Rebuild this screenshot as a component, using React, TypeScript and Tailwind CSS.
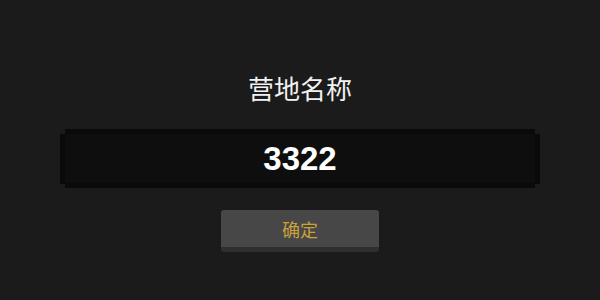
export default function App() {
  return (
    <div className="flex h-[300px] w-full flex-col items-center bg-[#1b1b1b] pt-[75px] font-['Liberation_Sans','Noto_Sans_CJK_SC',sans-serif]">
      <h1 className="font-['Noto_Sans_CJK_SC',sans-serif] text-[26px] leading-[26px] text-[#f2f2f2]">
        营地名称
      </h1>

      <div className="mt-[28px] flex items-center">
        <div className="h-[50px] w-[5px] bg-[#0a0a0a]" />
        <div className="flex h-[59px] w-[470px] items-center justify-center border-y-[5px] border-[#0a0a0a] bg-[#0e0e0e]">
          <span className="font-['Liberation_Sans',sans-serif] text-[33px] font-bold leading-none text-white">
            3322
          </span>
        </div>
        <div className="h-[50px] w-[5px] bg-[#0a0a0a]" />
      </div>

      <button className="mt-[22px] flex h-[42px] w-[158px] items-center justify-center rounded-[3px] border-b-[5px] border-[#2f2f2f] bg-[#474747] font-['Noto_Sans_CJK_SC',sans-serif] text-[18px] leading-none text-[#c9a13b]">
        确定
      </button>
    </div>
  );
}
